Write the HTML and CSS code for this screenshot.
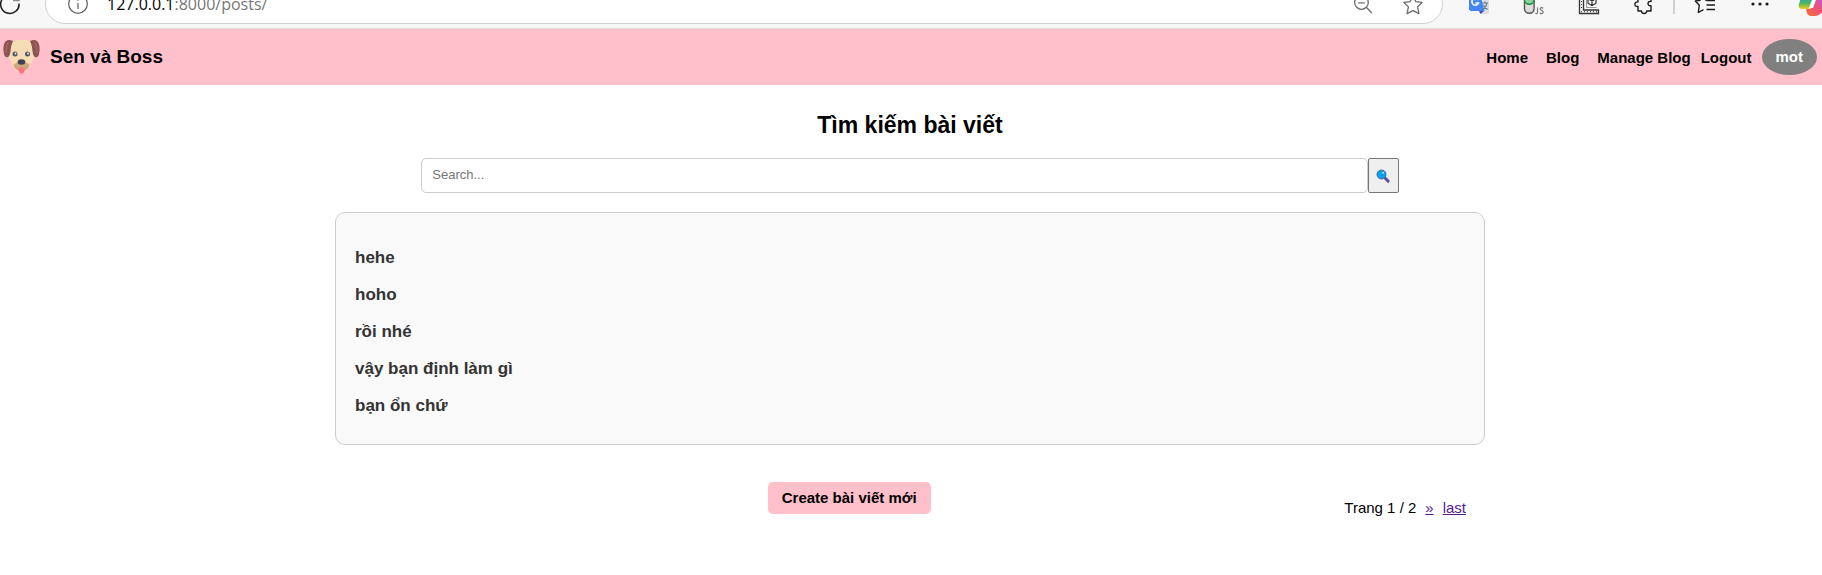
FILE: index.html
```html
<!DOCTYPE html>
<html lang="vi">
<head>
<meta charset="utf-8">
<meta name="viewport" content="width=device-width, initial-scale=1">
<title>Sen và Boss</title>
<link rel="stylesheet" href="styles.css">
</head>
<body>
<div class="toolbar">
  <div class="tool tool-reload">
    <svg width="22" height="24" viewBox="0 0 22 24" fill="none" stroke="#1b1b1b" stroke-width="1.5"><path d="M19 11.5A9.2 9.2 0 1 1 15.5 5"/><path d="M19 3v5.500h-6" stroke="#8a8a8a"/></svg>
  </div>
  <div class="address">
    <svg width="22" height="22" viewBox="0 0 22 22" fill="none" stroke="#666" stroke-width="1.300"><circle cx="11" cy="11" r="9.300"/><path d="M11 10v6M11 6v1.700"/></svg>
    <span class="url">127.0.0.1<span class="url-path">:8000/posts/</span></span>
    <svg width="20" height="22" viewBox="0 0 20 22" fill="none" stroke="#6b6b6b" stroke-width="1.300"><circle cx="8.500" cy="9.500" r="6.800"/><path d="M5.200 9.800h6.600M13.300 14.300l5.500 5.700"/></svg>
    <svg class="star" width="22" height="22" viewBox="0 0 22 22" fill="none" stroke="#6b6b6b" stroke-width="1.300" stroke-linejoin="round"><path d="M11 2.500l2.800 6.100 6.400.7-4.600 4.600 1.300 6.800-5.900-3.100-5.900 3.100 1.300-6.800L1.800 9.300l6.400-.7z"/></svg>
  </div>
  <div class="tool">
    <svg width="22" height="22" viewBox="0 0 22 22"><path d="M8 5h13v16H13z" fill="#dedede"/><path d="M1 0h11l4.500 18H2.500L1 16.500z" fill="#4285f4"/><path d="M11 18h5l-3.500 3z" fill="#3a48c4"/><path d="M10.300 7.200A3.400 3.400 0 1 0 10.500 10H7.500" fill="none" stroke="#fff" stroke-width="1.600"/><path d="M14.500 10H20M17 8.500V10M19 10c-.5 3-2 5-4 6.500M15.500 12c1 2 2 3 4 4.500" fill="none" stroke="#607d8b" stroke-width="1.200"/></svg>
  </div>
  <div class="tool">
    <svg width="22" height="22" viewBox="0 0 22 22"><path d="M1.500 0v15.500a4.800 4.800 0 0 0 9.600 0V0" fill="#ddd" stroke="#555" stroke-width="1.400"/><path d="M1.500 0v6.500a4.800 4.800 0 0 0 9.600 0V0z" fill="#8cd0a0" stroke="#17913c" stroke-width="1.400"/><path d="M14.500 14.500v4.800q0 1.700-2.200 1.200M20.300 15.100c-3-1.300-4 1.200-2 2.200 3.500 1.200 1.500 4.300-1.500 2.800" fill="none" stroke="#777" stroke-width="1.200"/></svg>
  </div>
  <div class="tool">
    <svg width="22" height="22" viewBox="0 0 22 22" fill="none" stroke="#333"><path d="M1.500 1v19.500h19v-3.500h-15V1z" stroke-width="1.300"/><path d="M3.500 2v15M3 18.700h17" stroke-dasharray="1 2"/><path d="M8.500 2v12.500h10" stroke="#999"/><path d="M14 3.500l4 2.200v4.500l-4 2.300-4-2.300V5.700zM10 5.700l4 2.300 4-2.300M14 8v4.500" stroke-width="1.200"/></svg>
  </div>
  <div class="tool">
    <svg width="22" height="22" viewBox="0 0 22 22" fill="none" stroke="#1b1b1b" stroke-width="1.400" stroke-linejoin="round"><path d="M5 4h3.500a2.500 2.500 0 0 1 5 0H18v4.500c-4-.8-4 4.800 0 4.200V18h-4.300c-.4 3.400-4.800 3.400-5.200 0H5v-4.500c-4.200.5-4.200-5 0-4.600z"/></svg>
  </div>
  <div class="divider"></div>
  <div class="tool">
    <svg width="22" height="22" viewBox="0 0 22 22" fill="none" stroke="#1b1b1b" stroke-width="1.400" stroke-linejoin="round"><path d="M14 7h-2.500L8.500 1 6 7.300l-4.700.7 4 4.200-1 7.300 5.200-2.800"/><path d="M12.500 7.500H21M12.500 12H21M12.500 16.500H21"/></svg>
  </div>
  <div class="tool">
    <svg width="22" height="22" viewBox="0 0 22 22" fill="#1b1b1b"><circle cx="4" cy="11" r="1.600"/><circle cx="11" cy="11" r="1.600"/><circle cx="18" cy="11" r="1.600"/></svg>
  </div>
  <div class="tool tool-last">
    <svg width="30" height="26" viewBox="0 0 30 26">
      <defs>
        <linearGradient id="warm" x1="0" y1="1" x2="1" y2="0"><stop offset="0" stop-color="#f6702c"/><stop offset=".5" stop-color="#ee4f7c"/><stop offset="1" stop-color="#b45be0"/></linearGradient>
        <linearGradient id="cool" x1="0" y1="0" x2="0" y2="1"><stop offset=".3" stop-color="#1fa0c8"/><stop offset=".7" stop-color="#55b65a"/><stop offset="1" stop-color="#f4cf20"/></linearGradient>
      </defs>
      <path d="M5 0h13l-5 15c-1 3-2 3-4 3H4c-3 0-4-2-3-5z" fill="url(#cool)"/>
      <path d="M18 7h11v12l-7 4q-2 2-5 2h-4c-2 0-3-1-4-3l-1-4h3c2 0 3-2 4-4z" fill="url(#warm)"/>
      <path d="M15 6h4l-4 11h-4z" fill="#fff"/>
    </svg>
  </div>
</div>

<header class="header">
  <svg class="logo" width="38" height="36" viewBox="0 0 38 36">
    <path d="M8 3Q18-1 28 2q4 1 4 8 0 8-4 14-3 9-9.500 10.500Q12 33 9 24 4 17 4.500 9 5 4 8 3z" fill="#f5deb5"/>
    <path d="M10 2Q4-1 1.500 4-.5 9 1 15q1 4 4 3 2-1 2.500-6Q8 6 10 2z" fill="#8c5450"/>
    <path d="M27 2q6-3 8.500 2 2 5 .5 11-1 4-4 3-2-1-2.500-6Q29 6 27 2z" fill="#8c5450"/>
    <path d="M5 3Q3 8 3 14M32 3q2 5 2 11" fill="none" stroke="#a3655f" stroke-width="1.500"/>
    <path d="M18.500 21q4 2 8 4.500-1 6.500-8 6.500t-8-6.500q4-2.500 8-4.500z" fill="#cfa57f"/>
    <circle cx="12" cy="15" r="2.500" fill="#55536a"/><circle cx="24.500" cy="15" r="2.500" fill="#55536a"/>
    <circle cx="12.500" cy="14.500" r=".9" fill="#fff"/><circle cx="25" cy="14.500" r=".9" fill="#fff"/>
    <ellipse cx="18.500" cy="23" rx="3.800" ry="2.700" fill="#43404f"/>
    <path d="M15.500 29.500q3-2 6 0 1 3.500-3 5.500-4-2-3-5.500z" fill="#ff7380"/>
  </svg>
  <div class="brand">Sen và Boss</div>
  <nav class="nav">
    <a class="nav-link" href="#">Home</a>
    <a class="nav-link" href="#">Blog</a>
    <a class="nav-link nav-manage" href="#">Manage Blog</a>
    <a class="nav-link nav-logout" href="#">Logout</a>
    <a class="user" href="#">mot</a>
  </nav>
</header>

<main class="main">
  <h2 class="title">Tìm kiếm bài viết</h2>
  <form class="search">
    <input class="search-input" type="text" placeholder="Search..." aria-label="Search">
    <button class="search-button" type="button" aria-label="Tìm kiếm">
      <svg width="14" height="14" viewBox="0 0 14 14"><path d="M8.800 8.800l3.300 3.300" stroke="#5d5299" stroke-width="3" stroke-linecap="round"/><circle cx="5.500" cy="5.500" r="4.500" fill="#00a6ed" stroke="#57609f" stroke-width="1"/><circle cx="7" cy="3.800" r="1" fill="#b8eaff"/></svg>
    </button>
  </form>
  <div class="posts">
    <a class="post" href="#">hehe</a>
    <a class="post" href="#">hoho</a>
    <a class="post" href="#">rồi nhé</a>
    <a class="post" href="#">vậy bạn định làm gì</a>
    <a class="post" href="#">bạn ổn chứ</a>
  </div>
  <div class="footer">
    <div class="create"><button class="create-button" type="button">Create bài viết mới</button></div>
    <div class="pages"><span>Trang 1 / 2</span><a class="page-link" href="#">»</a><a class="page-link" href="#">last</a></div>
  </div>
</main>
</body>
</html>
```

FILE: styles.css
```css
* {
  box-sizing: border-box;
}

body {
  margin: 0;
  background: #fff;
  color: #000;
  font-family: "Liberation Sans", Arial, sans-serif;
  font-size: 15px;
}

svg {
  display: block;
  flex: none;
}

/* Browser toolbar: only its lower edge shows */
.toolbar {
  display: flex;
  align-items: flex-end;
  height: 29px;
  padding: 0 1px 4px 0;
  overflow: hidden;
  background: #f7f7f7;
  border-bottom: 1px solid #e0dcdc;
}

.tool {
  display: flex;
  flex: none;
  align-items: center;
  justify-content: center;
  width: 55px;
  height: 40px;
}

.tool-reload {
  justify-content: flex-start;
  width: 45px;
}

.tool-last {
  justify-content: flex-start;
  width: 34px;
  padding-left: 11px;
}

.divider {
  flex: none;
  width: 2px;
  height: 30px;
  margin: 0 2px 10px;
  background: #cfcfcf;
}

.address {
  display: flex;
  flex: 1;
  align-items: center;
  height: 40px;
  margin-right: 8px;
  padding: 0 18px 0 21px;
  background: #fff;
  border: 1px solid #d0d0d0;
  border-radius: 20px;
}

.url {
  flex: 1;
  margin-left: 18px;
  font-family: "Open Sans", "Noto Sans", sans-serif;
  font-size: 16px;
  line-height: 24px;
}

.url-path {
  color: #767676;
}

.star {
  margin-left: 29px;
}

.header {
  display: flex;
  align-items: center;
  height: 56px;
  padding: 0 5px 0 3px;
  background: #ffc0cb;
}

.brand {
  margin-left: 9px;
  font-size: 19px;
  font-weight: bold;
}

.nav {
  display: flex;
  align-items: center;
  margin-left: auto;
  font-weight: bold;
}

.nav-link {
  margin-right: 18px;
  color: #000;
  text-decoration: none;
}

.nav-manage,
.nav-logout {
  margin-right: 10px;
}

.user {
  padding: 0 14px;
  background: #808080;
  border-radius: 50%;
  color: #fff;
  line-height: 36px;
  text-decoration: none;
}

.main {
  max-width: 1152px;
  margin: 0 auto;
  padding: 26px 2px 0 0;
}

.title {
  margin: 0;
  font-size: 23px;
  line-height: 28px;
  text-align: center;
}

.search {
  display: flex;
  width: 85%;
  margin: 19px auto;
}

.search-input {
  flex: 1;
  min-width: 0;
  height: 35px;
  padding: 0 10px 2px;
  border: 1px solid #ccc;
  border-radius: 5px;
  font-family: inherit;
  font-size: 13px;
}

.search-input::placeholder {
  color: #757575;
}

.search-button {
  display: flex;
  align-items: center;
  justify-content: center;
  width: 31px;
  padding: 0;
  background: #efefef;
  border: 1px solid #767676;
  border-radius: 2px;
}

.posts {
  display: flex;
  flex-direction: column;
  align-items: flex-start;
  padding: 26px 19px 20px;
  background: #f9f9f9;
  border: 1px solid #ccc;
  border-radius: 10px;
}

.post {
  color: #333;
  font-size: 17px;
  font-weight: bold;
  line-height: 37px;
  text-decoration: none;
}

.footer {
  display: flex;
  align-items: flex-start;
  margin-top: 37px;
  padding-right: 19px;
}

.create {
  flex: 1;
  padding-left: 19px;
  text-align: center;
}

.create-button {
  padding: 0 14px;
  background: #ffc0cb;
  border: 0;
  border-radius: 5px;
  color: #000;
  font-family: inherit;
  font-size: 15px;
  font-weight: bold;
  line-height: 32px;
}

.pages {
  display: flex;
  gap: 9px;
  padding-top: 17px;
  line-height: 18px;
}

.page-link {
  color: #551a8b;
}
```
